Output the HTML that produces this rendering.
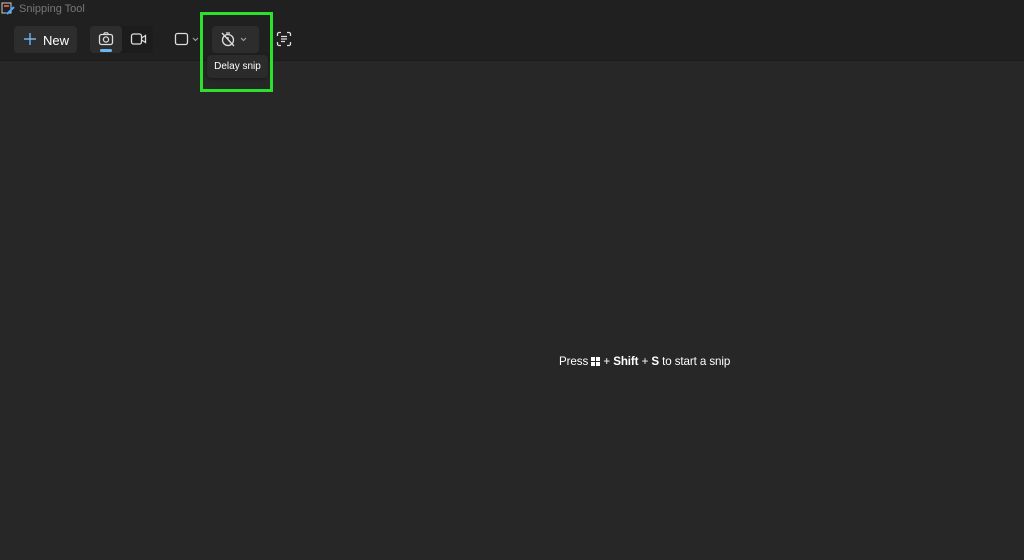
<!DOCTYPE html>
<html><head><style>
body{margin:0;width:1024px;height:560px;background:#272727;font-family:"Liberation Sans",sans-serif;overflow:hidden;position:relative;color:#fff}
.top{position:absolute;left:0;top:0;width:1024px;height:60px;background:#202020;border-bottom:1px solid #1c1c1c}
.a{position:absolute}
</style></head><body>
<div class="top"></div>
<svg class="a" style="left:1px;top:2px" width="14" height="14"><rect x="1" y="1" width="9" height="10" fill="none" stroke="#ccc"/><rect x="3" y="3" width="5" height="2" fill="#c55"/><path d="M6 12 L13 5" stroke="#4af" stroke-width="2"/></svg>
<div class="a" style="left:19px;top:3px;font-size:11px;color:#777">Snipping Tool</div>
<div class="a" style="left:14px;top:26px;width:63px;height:27px;background:#2d2d2d;border-radius:4px"></div>
<svg class="a" style="left:23px;top:32px" width="14" height="14"><path d="M7 1V13M1 7H13" stroke="#6cb6f0" stroke-width="1.4"/></svg>
<div class="a" style="left:43px;top:33px;font-size:13px;color:#fff">New</div>
<div class="a" style="left:90px;top:26px;width:63px;height:27px;background:#1c1c1c;border-radius:4px"></div>
<div class="a" style="left:90px;top:26px;width:32px;height:27px;background:#2d2d2d;border-radius:4px"></div>
<svg class="a" style="left:98px;top:31px" width="16" height="16"><rect x="1.5" y="3.5" width="13" height="10" rx="2" fill="none" stroke="#ddd" stroke-width="1.3"/><circle cx="8" cy="8.5" r="2.6" fill="none" stroke="#ddd" stroke-width="1.3"/><path d="M5.5 3.5 L6.5 1.8 H9.5 L10.5 3.5" fill="none" stroke="#ddd" stroke-width="1.2"/></svg>
<div class="a" style="left:100px;top:49px;width:12px;height:3px;background:#6cb6f0;border-radius:2px"></div>
<svg class="a" style="left:130px;top:31px" width="18" height="16"><rect x="1.5" y="3" width="10" height="10" rx="2" fill="none" stroke="#ddd" stroke-width="1.3"/><path d="M11.5 7 L15.5 4.5 V11.5 L11.5 9" fill="none" stroke="#ddd" stroke-width="1.3"/></svg>
<svg class="a" style="left:174px;top:31px" width="30" height="16"><rect x="1.5" y="2.5" width="12" height="11" rx="2" fill="none" stroke="#ddd" stroke-width="1.3"/><path d="M19 7 L21.5 9.5 L24 7" fill="none" stroke="#aaa" stroke-width="1"/></svg>
<div class="a" style="left:212px;top:26px;width:47px;height:27px;background:#2d2d2d;border-radius:4px"></div>
<svg class="a" style="left:220px;top:31px" width="34" height="16"><circle cx="8" cy="9" r="5.5" fill="none" stroke="#ddd" stroke-width="1.3"/><path d="M6 2H10M2 2L14 15M8 6V9" stroke="#ddd" stroke-width="1.3" fill="none"/><path d="M21 7 L23.5 9.5 L26 7" fill="none" stroke="#aaa" stroke-width="1"/></svg>
<div class="a" style="left:207px;top:55px;width:61px;height:23px;background:#2b2b2b;border-radius:4px;box-shadow:0 1px 3px #0006;font-size:10px;line-height:23px;text-align:center;color:#fff">Delay snip</div>
<div class="a" style="left:200px;top:12px;width:67px;height:74px;border:3px solid #2ee02e"></div>
<svg class="a" style="left:276px;top:31px" width="16" height="16"><path d="M1.5 5V3A1.5 1.5 0 0 1 3 1.5H5M11 1.5H13A1.5 1.5 0 0 1 14.5 3V5M14.5 11V13A1.5 1.5 0 0 1 13 14.5H11M5 14.5H3A1.5 1.5 0 0 1 1.5 13V11M5 5.5H11M5 8H11M5 10.5H9" fill="none" stroke="#ddd" stroke-width="1.3"/></svg>
<div class="a" style="left:559px;top:355px;font-size:11.6px;letter-spacing:-0.1px;color:#fff;white-space:nowrap">Press <svg width="9" height="9" style="vertical-align:-1px"><rect x="0" y="0" width="4" height="4" fill="#fff"/><rect x="5" y="0" width="4" height="4" fill="#fff"/><rect x="0" y="5" width="4" height="4" fill="#fff"/><rect x="5" y="5" width="4" height="4" fill="#fff"/></svg> + <b>Shift</b> + <b>S</b> to start a snip</div>
</body></html>
